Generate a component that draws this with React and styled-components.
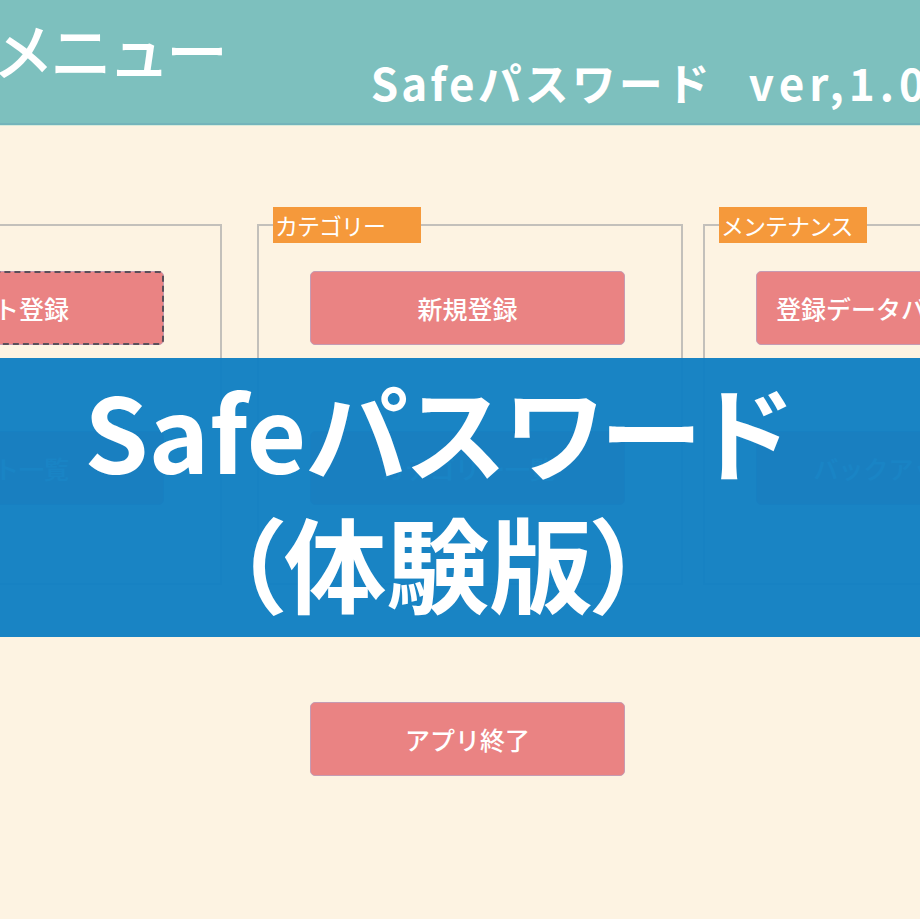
import React from 'react';
import styled, { createGlobalStyle } from 'styled-components';

const groups = [
  { title: 'サイト', buttons: ['サイト登録', 'サイト一覧'], gap: 35 },
  { title: 'カテゴリー', buttons: ['新規登録', 'カテゴリー一覧'], gap: 20 },
  { title: 'メンテナンス', buttons: ['登録データバックアップ', 'バックアップ復元'], gap: 0 },
];

const App = () => {
  return (
    <Page>
      <GlobalStyle />
      <Header>
        <Title>メニュー</Title>
        <Version>
          <AppName>Safeパスワード</AppName>
          <VersionNumber>ver,1.0</VersionNumber>
        </Version>
      </Header>
      <Main>
        <GroupRow>
          {groups.map((group, index) => (
            <Group key={group.title} $gap={group.gap}>
              <GroupLegend>{group.title}</GroupLegend>
              <ButtonStack>
                {group.buttons.map((label, i) => (
                  <MenuButton key={label} $focused={index === 0 && i === 0}>
                    {label}
                  </MenuButton>
                ))}
              </ButtonStack>
            </Group>
          ))}
        </GroupRow>
        <ExitRow>
          <MenuButton>アプリ終了</MenuButton>
        </ExitRow>
      </Main>
      <Banner>
        <BannerText>
          Safeパスワード
          <br />
          （体験版）
        </BannerText>
      </Banner>
    </Page>
  );
};

export default App;

const GlobalStyle = createGlobalStyle`
  html, body {
    margin: 0;
    padding: 0;
    background: #fdf3e2;
    overflow: hidden;
  }
  * {
    box-sizing: border-box;
  }
`;

const Page = styled.div`
  position: relative;
  width: 920px;
  height: 919px;
  overflow: hidden;
  background: #fdf3e2;
  font-family: 'Noto Sans CJK JP', 'Noto Sans', sans-serif;
`;

const Header = styled.div`
  display: flex;
  justify-content: space-between;
  align-items: flex-start;
  height: 125px;
  background: #7dc0be;
  border-bottom: 2px solid #74b4bb;
  box-shadow: 0 1px 0 #d9eadb;
`;

const Title = styled.h1`
  margin: 12px 0 0 -8px;
  font-size: 62px;
  font-weight: 500;
  line-height: 1.2;
  color: #ffffff;
  letter-spacing: -4px;
`;

const Version = styled.div`
  display: flex;
  margin: 56px -10px 0 0;
  font-size: 44px;
  font-weight: 700;
  line-height: 1.2;
  color: #ffffff;
  white-space: nowrap;
`;

const AppName = styled.span`
  letter-spacing: 3px;
`;

const VersionNumber = styled.span`
  margin-left: 36px;
  letter-spacing: 5px;
`;

const Main = styled.div`
  display: flex;
  flex-direction: column;
  padding-top: 82px;
`;

const GroupRow = styled.div`
  display: flex;
  margin-left: -204px;
`;

const Group = styled.fieldset`
  flex: 0 0 426px;
  height: 378px;
  margin: 0 ${({ $gap }) => $gap}px 0 0;
  padding: 0;
  border: 2px solid #c3c0bb;
`;

const GroupLegend = styled.legend`
  width: 148px;
  margin-left: 14px;
  padding: 0 2px;
  background: #f5993b;
  color: #ffffff;
  font-size: 23px;
  line-height: 36px;
  letter-spacing: -1px;
`;

const ButtonStack = styled.div`
  display: flex;
  flex-direction: column;
  align-items: flex-start;
  gap: 86px;
  padding: 28px 0 0 51px;
`;

const MenuButton = styled.button`
  width: 315px;
  height: 74px;
  padding: 0;
  background: #ea8383;
  border: 1px solid #c59bb3;
  border-radius: 5px;
  color: #ffffff;
  font-family: 'Noto Sans CJK JP', 'Noto Sans', sans-serif;
  font-size: 25px;
  font-weight: 500;
  white-space: nowrap;
  outline: ${({ $focused }) => ($focused ? '2px dashed #5a4f5a' : 'none')};
  outline-offset: -2px;
`;

const ExitRow = styled.div`
  display: flex;
  padding: 117px 0 0 310px;
`;

const Banner = styled.div`
  position: absolute;
  top: 358px;
  left: 0;
  right: 0;
  height: 279px;
  display: flex;
  align-items: center;
  justify-content: center;
  padding-right: 44px;
  background: rgba(16, 127, 195, 0.96);
`;

const BannerText = styled.div`
  color: #ffffff;
  font-size: 103px;
  font-weight: 700;
  line-height: 132px;
  text-align: center;
  font-feature-settings: 'palt';
  padding-bottom: 4px;
`;
